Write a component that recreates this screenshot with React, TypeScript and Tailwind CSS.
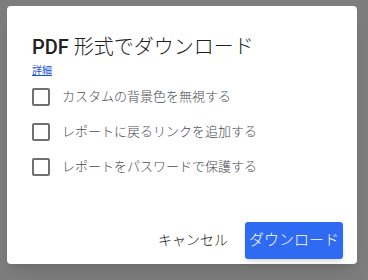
import React from 'react';

const font = { fontFamily: '"Roboto", "Noto Sans CJK JP", sans-serif' };

const options = [
  'カスタムの背景色を無視する',
  'レポートに戻るリンクを追加する',
  'レポートをパスワードで保護する',
];

function Checkbox({ label }: { label: string }) {
  return (
    <label className="flex items-center h-[35px] cursor-pointer">
      <span className="w-[18px] h-[18px] border-2 border-[#707070] rounded-[2px] shrink-0" />
      <span className="ml-[12px] text-[13px] font-light text-[#4a4d52] leading-none">{label}</span>
    </label>
  );
}

export default function App() {
  return (
    <div className="w-[368px] h-[280px] bg-[#7d7d7d] pt-[6px] pl-[7px] overflow-hidden" style={font}>
      <div className="w-[350px] h-[258px] bg-white rounded-[4px] shadow-lg flex flex-col pl-[25px] pr-[14px] pt-[28px] pb-[5px]">
        <h1 className="text-[20px] leading-[26px] text-[#202124] font-light">
          <span className="font-medium">PDF</span> 形式でダウンロード
        </h1>
        <a href="#" className="mt-[5px] text-[10px] leading-[12px] text-[#1a4fd8] underline w-fit">
          詳細
        </a>
        <div className="mt-[2px] flex flex-col">
          {options.map((o) => (
            <Checkbox key={o} label={o} />
          ))}
        </div>
        <div className="mt-auto flex items-center justify-end gap-[16px]">
          <button className="text-[14px] font-light text-[#202020] px-[1px]">キャンセル</button>
          <button className="w-[98px] h-[37px] bg-[#2f6af2] text-white text-[15px] font-light rounded-[3px] shadow-md">
            ダウンロード
          </button>
        </div>
      </div>
    </div>
  );
}
